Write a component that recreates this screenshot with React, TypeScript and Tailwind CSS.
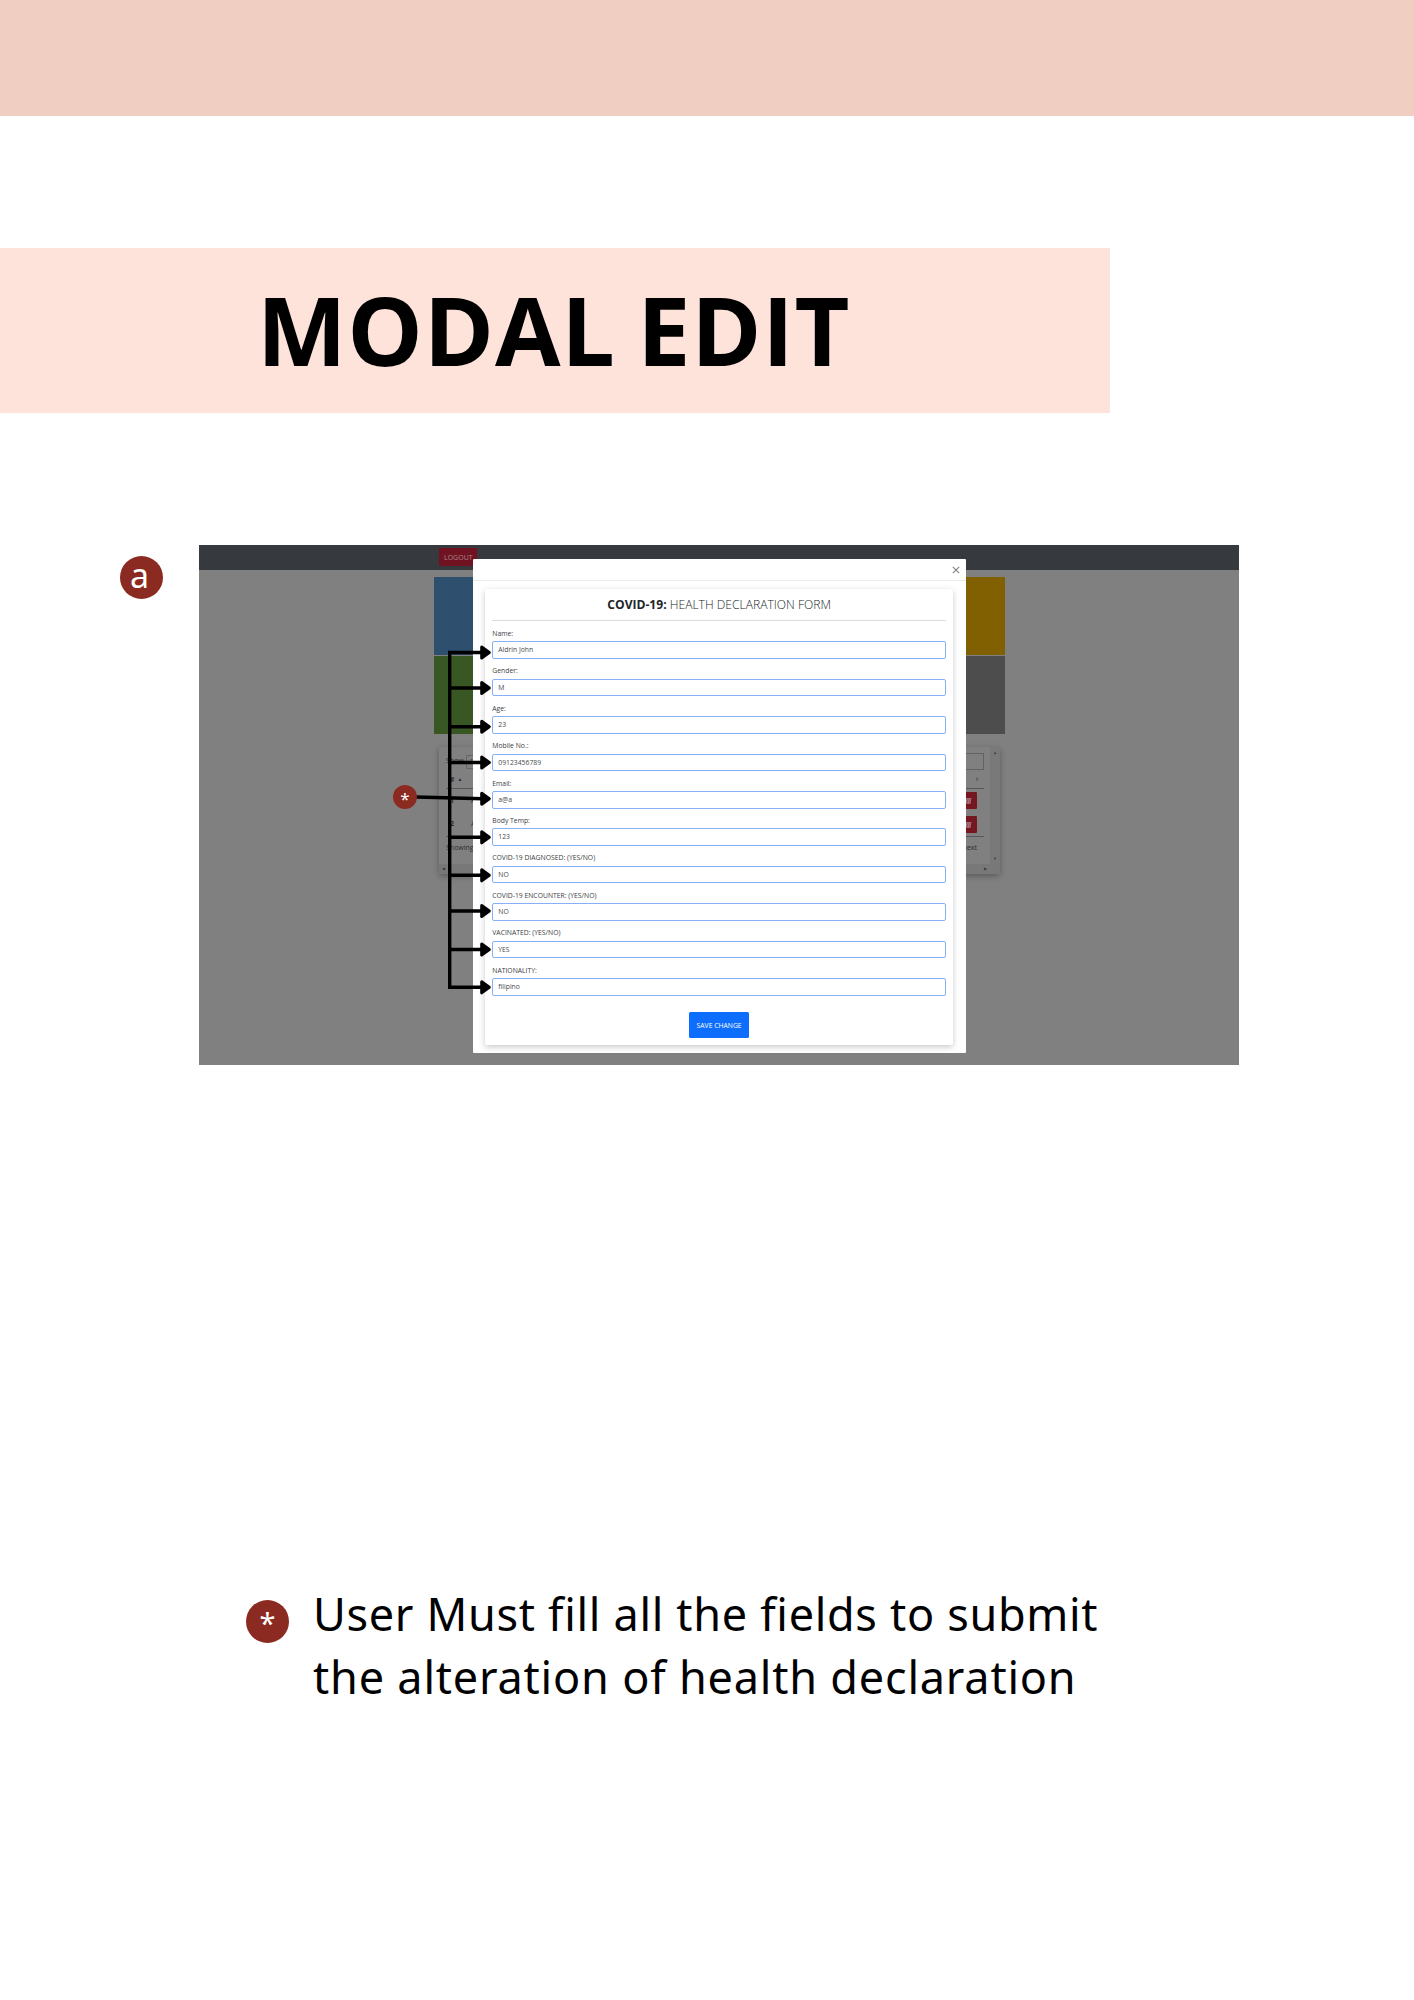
import React from "react";

const fields = [
  ["Name:", "Aldrin John"],
  ["Gender:", "M"],
  ["Age:", "23"],
  ["Mobile No.:", "09123456789"],
  ["Email:", "a@a"],
  ["Body Temp:", "123"],
  ["COVID-19 DIAGNOSED: (YES/NO)", "NO"],
  ["COVID-19 ENCOUNTER: (YES/NO)", "NO"],
  ["VACINATED: (YES/NO)", "YES"],
  ["NATIONALITY:", "filipino"],
];

const arrowYs = [107.5, 143, 181.7, 217.5, 253.7, 292.3, 330.3, 366, 404.5, 442.3];

function Trash() {
  return (
    <svg viewBox="0 0 8 8" className="h-[7px] w-[7px]" fill="#a58a8d">
      <path d="M0.5 1h7v1h-7zM1.2 2.5h5.6l-.5 5.2H1.7z" />
      <path d="M3 3.2v3.6M5 3.2v3.6" stroke="#7a1620" strokeWidth=".6" />
    </svg>
  );
}

function Backdrop() {
  return (
    <div className="flex h-full flex-col bg-[#808080]">
      <div className="h-[25px] shrink-0 bg-[#363a3f] pt-[3px] pl-[239.5px]">
        <div className="h-[18px] w-[38px] bg-[#70121f] pl-[5.5px] text-[7px] leading-[19px] text-[#a8898d]">LOGOUT</div>
      </div>
      <div className="mt-[6.5px] ml-[234.5px] grid h-[157px] w-[571.5px] shrink-0 grid-cols-2 grid-rows-2 gap-y-[1px]">
        <div className="bg-[#2e4f6e]" />
        <div className="bg-[#806000]" />
        <div className="bg-[#385723]" />
        <div className="bg-[#4d4d4d]" />
      </div>
      <div className="mt-[13.5px] ml-[240px] flex h-[127px] w-[561px] shrink-0 flex-col rounded-[2px] bg-[#808080] text-[7px] text-[#2b2d30] shadow-[0_2px_6px_rgba(0,0,0,0.3)]">
        <div className="flex h-[117px]">
          <div className="flex w-[551px] flex-col pr-[6px] pl-[7px]">
            <div className="flex h-[29px] items-center justify-between">
              <div className="flex items-center gap-[2px]">
                <span>Show</span>
                <div className="h-[14px] w-[24px] rounded-[1px] border border-[#636567] pl-[3px] leading-[12px]">10</div>
              </div>
              <div className="h-[17px] w-[80px] border border-[#606264]" />
            </div>
            <div className="flex h-[13px] items-center justify-between border-b border-[#55585b] pb-[4px] font-bold">
              <span className="flex items-center gap-[3px] pl-[4px]"># <b className="text-[5px]">▲</b><span className="pl-[9px]">Name</span></span>
              <span className="pr-[5px] text-[5px] text-[#606264]">⬍</span>
            </div>
            {["1", "2"].map((n) => (
              <div key={n} className="flex h-[23.5px] items-center justify-between pr-[7px] pl-[4px]">
                <span className="flex font-bold">{n}<span className="pl-[17px] font-normal">Aldrin</span></span>
                <div className="flex h-[17px] w-[17px] items-center justify-center rounded-[1px] bg-[#761620]"><Trash /></div>
              </div>
            ))}
            <div className="flex h-[24px] items-center justify-between border-t border-[#55585b] pr-[7px]">
              <span>Showing 1 to 2</span>
              <span>Next</span>
            </div>
          </div>
          <div className="flex w-[10px] flex-col items-center justify-between bg-[#797979] py-[2px] text-[4px] leading-[7px] text-[#3a3a3a]">
            <span>▲</span><span>▼</span>
          </div>
        </div>
        <div className="flex h-[10px] items-center justify-between bg-[#787878] pr-[13px] pl-[3px] text-[4px] text-[#3a3a3a]">
          <span>◀</span><span>▶</span>
        </div>
      </div>
    </div>
  );
}

function Modal() {
  return (
    <div className="absolute top-[14px] left-[273.5px] flex h-[493.5px] w-[493.2px] flex-col rounded-[1px] bg-white">
      <div className="flex h-[22px] shrink-0 items-center justify-end border-b border-[#e9ecef] pr-[6px]">
        <svg viewBox="0 0 8 8" className="h-[8px] w-[8px]" stroke="#808080" strokeWidth="1.1">
          <path d="M.8.8l6.4 6.4M7.2.8L.8 7.2" />
        </svg>
      </div>
      <div className="mx-[12.3px] mt-[7.5px] flex h-[456px] flex-col rounded-[2px] bg-white px-[7.5px] shadow-[0_2px_6px_rgba(0,0,0,0.22)]">
        <h2 className="h-[32px] shrink-0 border-b border-[#dcdcdc] text-center text-[12.1px] leading-[31px] whitespace-nowrap text-[#212529]">
          <b>COVID-19:</b> <span className="font-light">HEALTH DECLARATION FORM</span>
        </h2>
        <div className="mt-[7.3px]">
          {fields.map(([label, value]) => (
            <div key={label} className="flex h-[37.45px] flex-col">
              <label className="h-[13.5px] text-[6.8px] leading-[11.5px] text-[#3c4043]">{label}</label>
              <div className="h-[17.5px] rounded-[2px] border border-[#86b0f8] pl-[5px] text-[6.8px] leading-[16.5px] text-[#45494d]">{value}</div>
            </div>
          ))}
        </div>
        <button className="mt-[10px] h-[26px] w-[60px] shrink-0 self-center rounded-[1.5px] bg-[#0d6efd] pt-[1px] text-[6.8px] text-white">SAVE CHANGE</button>
      </div>
    </div>
  );
}

function Arrows() {
  return (
    <svg className="absolute inset-0 h-[520px] w-[1040px]" viewBox="0 0 1040 520" fill="none" stroke="#000" strokeWidth="3.4">
      <path d="M250.7 106V444" />
      {arrowYs.map((y, i) => (
        <g key={y}>
          <path d={i === 4 ? `M217 252 L284 ${y}` : `M249 ${y}H284`} />
          <path d={`M282.7 ${y - 5.5}L290.3 ${y}L282.7 ${y + 5.5}Z`} fill="#000" strokeWidth="3" strokeLinejoin="round" />
        </g>
      ))}
    </svg>
  );
}

export default function App() {
  return (
    <main className="flex h-[2000px] w-[1414px] flex-col overflow-hidden bg-white font-['Open_Sans','Noto_Sans',sans-serif] text-black">
      <div className="h-[115.5px] shrink-0 bg-[#f0cfc2]" />
      <div className="mt-[132.5px] h-[164.5px] w-[1110px] shrink-0 bg-[#fee3da] pl-[257px]">
        <h1 className="text-[95px] leading-[162px] font-bold tracking-[0.8px] whitespace-nowrap [word-spacing:-4px]">MODAL EDIT</h1>
      </div>
      <section className="mt-[132.5px] flex shrink-0 items-start">
        <div className="mt-[10.5px] ml-[120px] flex h-[43px] w-[43px] items-center justify-center rounded-full bg-[#8b2a20] pr-[4px] pb-[4px] font-['Noto_Sans',sans-serif] text-[34px] leading-none text-white">a</div>
        <div className="relative ml-[36px] h-[520px] w-[1040px]">
          <Backdrop />
          <Modal />
          <Arrows />
          <div className="absolute top-[239.7px] left-[193.7px] flex h-[24.6px] w-[24.6px] items-center justify-center rounded-full bg-[#8b2a20] pt-[4px] font-['Noto_Sans',sans-serif] text-[17px] leading-none text-white">*</div>
        </div>
      </section>
      <section className="mt-[517px] ml-[246px] flex shrink-0 items-start">
        <div className="mt-[17.5px] flex h-[43px] w-[43px] items-center justify-center rounded-full bg-[#8b2a20] pt-[2px] font-['Noto_Sans',sans-serif] text-[29px] leading-none text-white">*</div>
        <p className="ml-[24px] font-['Noto_Sans',sans-serif] text-[45px] leading-[63px] tracking-[0.68px] whitespace-nowrap">
          User Must fill all the fields to submit
          <br />
          <span className="tracking-[0.8px]">the alteration of health declaration</span>
        </p>
      </section>
    </main>
  );
}
